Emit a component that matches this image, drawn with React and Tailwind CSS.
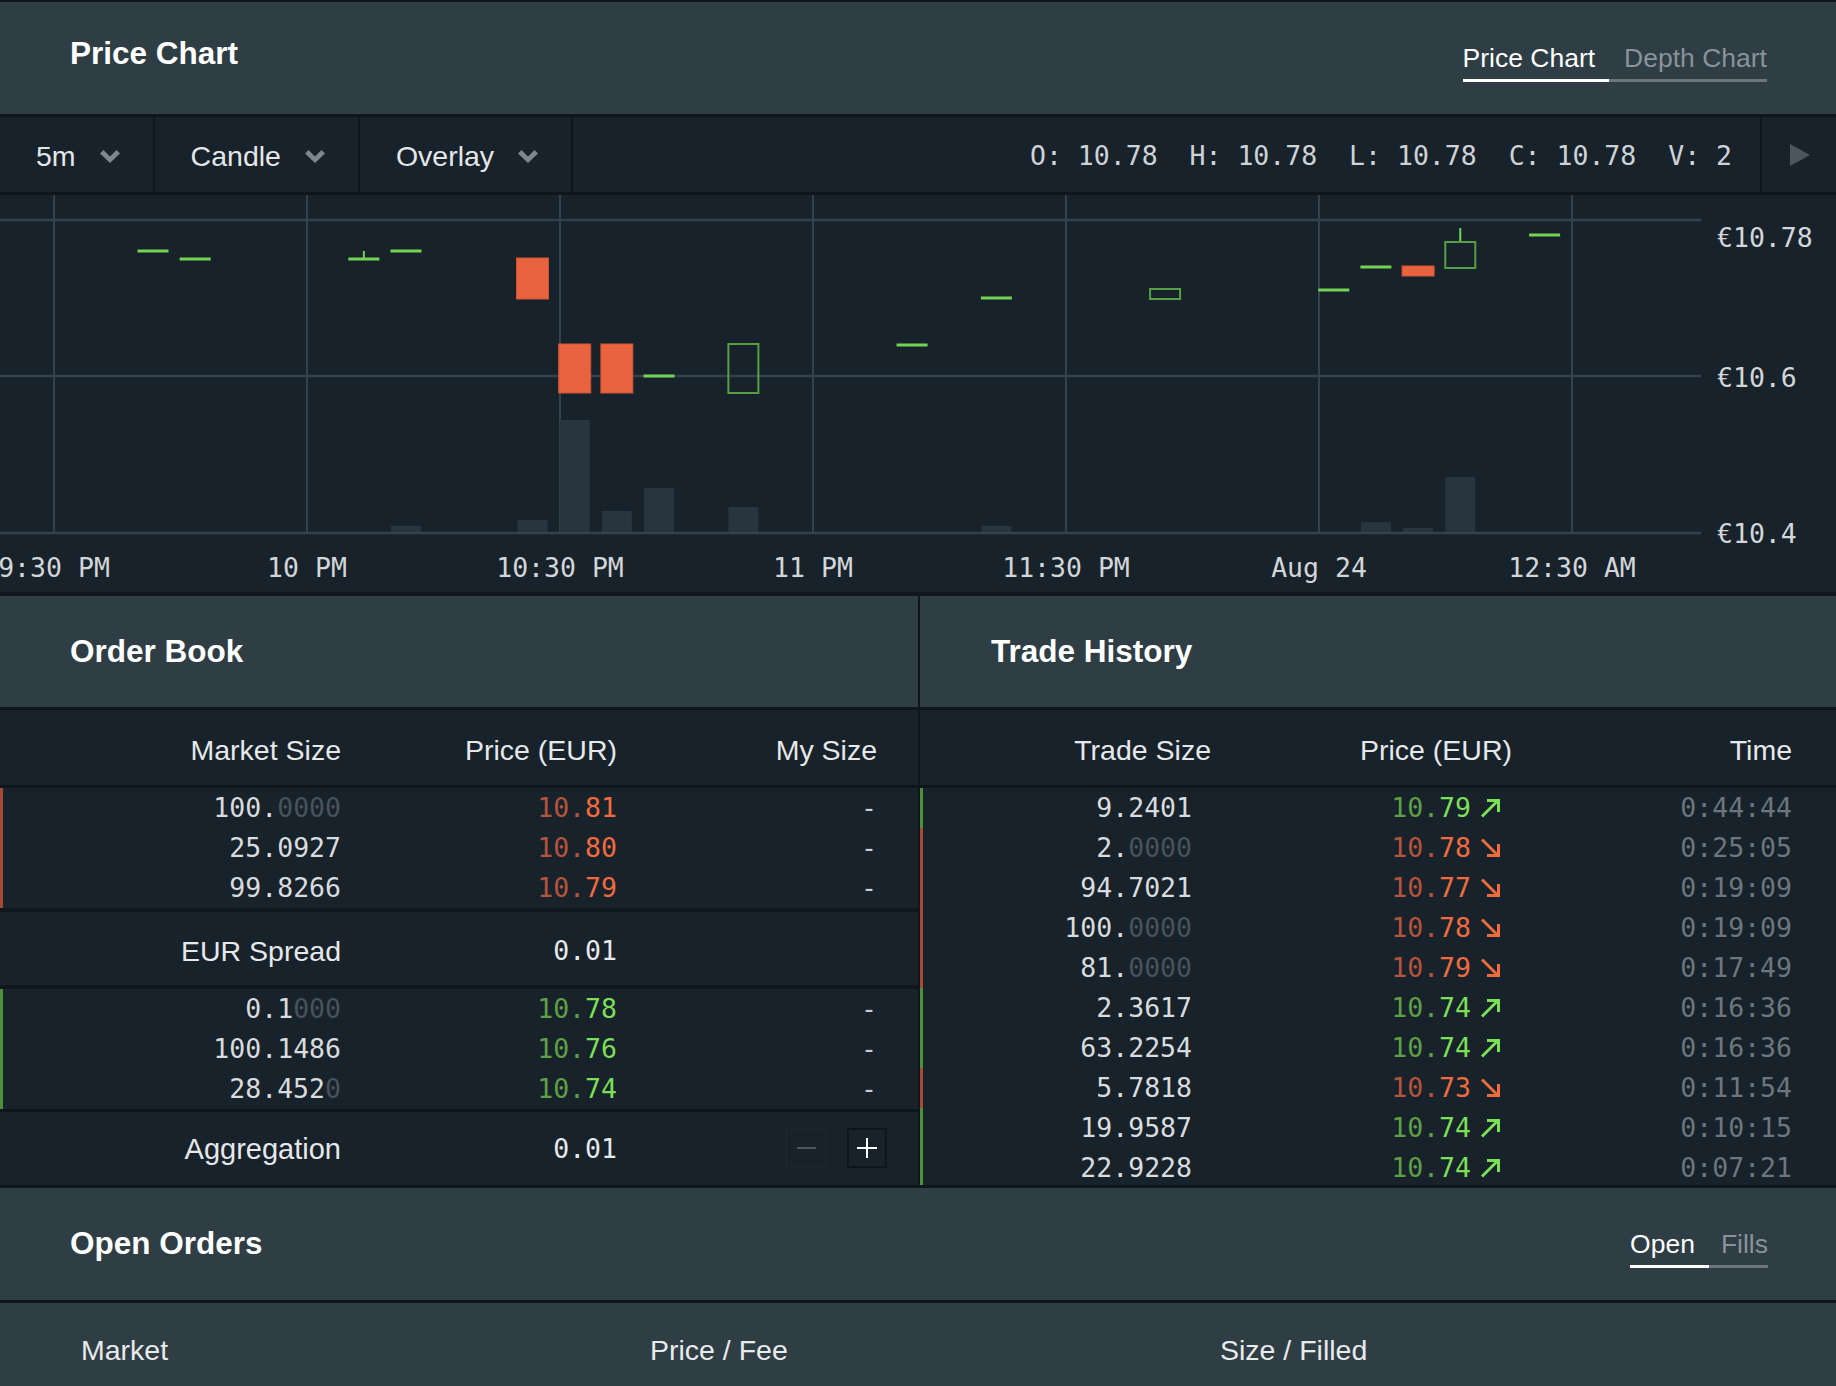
import clsx from "clsx";

const MONO = "font-['DejaVu_Sans_Mono',monospace]";

// chart geometry (px inside the chart svg, origin at chart top-left)
const X0 = 153;
const STEP = 42.17;
const cx = (i) => X0 + i * STEP;

const candles = [
  { i: 0, flat: 56 },
  { i: 1, flat: 64 },
  { i: 5, flat: 64, wick: [56, 64] },
  { i: 6, flat: 56 },
  { i: 9, red: [63, 104] },
  { i: 10, red: [149, 198] },
  { i: 11, red: [149, 198] },
  { i: 12, flat: 181 },
  { i: 14, hollow: [149, 198] },
  { i: 18, flat: 150 },
  { i: 20, flat: 103 },
  { i: 24, hollow: [94, 104] },
  { i: 28, flat: 95 },
  { i: 29, flat: 72 },
  { i: 30, red: [71, 81] },
  { i: 31, hollow: [47, 73], wick: [33, 47] },
  { i: 33, flat: 40 },
];

const volumes = [
  [6, 331], [9, 325], [10, 225], [11, 316], [12, 293],
  [14, 312], [20, 331], [29, 327], [30, 333], [31, 282],
];

const gridX = [54, 307, 560, 813, 1066, 1319, 1572];
const timeLabels = ["9:30 PM", "10 PM", "10:30 PM", "11 PM", "11:30 PM", "Aug 24", "12:30 AM"];

const asks = [
  { size: "100.", dim: "0000", price: "81" },
  { size: "25.0927", dim: "", price: "80" },
  { size: "99.8266", dim: "", price: "79" },
];

const bids = [
  { size: "0.1", dim: "000", price: "78" },
  { size: "100.1486", dim: "", price: "76" },
  { size: "28.452", dim: "0", price: "74" },
];

const trades = [
  ["9.2401", "", "79", "up", "0:44:44"],
  ["2.", "0000", "78", "down", "0:25:05"],
  ["94.7021", "", "77", "down", "0:19:09"],
  ["100.", "0000", "78", "down", "0:19:09"],
  ["81.", "0000", "79", "down", "0:17:49"],
  ["2.3617", "", "74", "up", "0:16:36"],
  ["63.2254", "", "74", "up", "0:16:36"],
  ["5.7818", "", "73", "down", "0:11:54"],
  ["19.9587", "", "74", "up", "0:10:15"],
  ["22.9228", "", "74", "up", "0:07:21"],
];

const Chevron = () => (
  <svg width="20" height="13" viewBox="0 0 20 13">
    <polygon points="0,3.5 3.5,0 10,6.5 16.5,0 20,3.5 10,13" fill="#7e878e" />
  </svg>
);

const Arrow = ({ dir }) => (
  <svg width="21" height="20" viewBox="0 0 21 20" className="shrink-0">
    {dir === "up" ? (
      <path d="M2 18.5 L18 2.5 M7 2.5 H18.5 V14" stroke="currentColor" strokeWidth="3" fill="none" />
    ) : (
      <path d="M2 1.5 L18 17.5 M18.5 6 V17.5 H7" stroke="currentColor" strokeWidth="3" fill="none" />
    )}
  </svg>
);

const Tabs = ({ items }) => (
  <div className="flex mt-[7px]">
    {items.map((t) => (
      <div
        key={t.label}
        className={clsx(
          "pb-[4px] border-b-[3px] text-[26.5px] leading-[34px]",
          t.active ? "border-white text-white" : "border-[#6b767e] text-[#89939a]",
          t.pad
        )}
      >
        {t.label}
      </div>
    ))}
  </div>
);

const Dropdown = ({ label }) => (
  <div className="flex items-center gap-[24px] pl-[36px] pr-[33px] pt-[3px] border-r-2 border-[#0f161c]">
    <span className="text-[28.5px] leading-none text-[#e4e6e8]">{label}</span>
    <Chevron />
  </div>
);

const Divider = ({ h }) => <div className={clsx("bg-[#0f161c] shrink-0", h)} />;

const PriceChart = () => (
  <svg width="1836" height="397" className="block shrink-0 bg-[#18222b]">
    {gridX.map((x) => (
      <line key={x} x1={x} x2={x} y1="0" y2="338" stroke="#36424b" strokeWidth="2" />
    ))}
    {[25, 181, 338].map((y) => (
      <line key={y} x1="0" x2="1701" y1={y} y2={y} stroke="#36424b" strokeWidth="2.5" />
    ))}
    {volumes.map(([i, top]) => (
      <rect key={i} x={cx(i) - 15} y={top} width="30" height={337 - top} fill="#29353e" />
    ))}
    {candles.map((c) => (
      <g key={c.i}>
        {c.wick && (
          <line x1={cx(c.i)} x2={cx(c.i)} y1={c.wick[0]} y2={c.wick[1]} stroke="#72d552" strokeWidth="2" />
        )}
        {c.flat !== undefined && (
          <rect x={cx(c.i) - 15.5} y={c.flat - 1.5} width="31" height="3" fill="#72d552" />
        )}
        {c.red && (
          <rect x={cx(c.i) - 16} y={c.red[0]} width="32" height={c.red[1] - c.red[0]} fill="#e9633f" stroke="#cf5434" strokeWidth="1" />
        )}
        {c.hollow && (
          <rect
            x={cx(c.i) - 15}
            y={c.hollow[0]}
            width="30"
            height={c.hollow[1] - c.hollow[0]}
            fill="none"
            stroke="#55a040"
            strokeWidth="2"
          />
        )}
      </g>
    ))}
    <g fontFamily="'DejaVu Sans Mono', monospace" fontSize="26.5" fill="#d3d6d9">
      <text x="1717" y="42" dominantBaseline="central">€10.78</text>
      <text x="1717" y="182" dominantBaseline="central">€10.6</text>
      <text x="1717" y="338" dominantBaseline="central">€10.4</text>
      {timeLabels.map((t, k) => (
        <text key={t} x={gridX[k]} y="372" textAnchor="middle" dominantBaseline="central">
          {t}
        </text>
      ))}
    </g>
  </svg>
);

const Price = ({ last, side }) => (
  <>
    <span className={side === "ask" ? "text-[#b5533b]" : "text-[#5da045]"}>10.</span>
    <span className={side === "ask" ? "text-[#f26b3e]" : "text-[#7bdf58]"}>{last}</span>
  </>
);

const BookRow = ({ row, side }) => (
  <div className={clsx("flex h-[40px] items-center text-[26.5px] leading-none", MONO)}>
    <div className="w-[341px] text-right text-[#d9dcde]">
      {row.size}
      <span className="text-[#48535b]">{row.dim}</span>
    </div>
    <div className="w-[276px] text-right">
      <Price last={row.price} side={side} />
    </div>
    <div className="w-[260px] text-right text-[#c9cdd0]">-</div>
  </div>
);

const Title = ({ children, className }) => (
  <h2 className={clsx("text-[31.5px] font-bold text-white leading-none", className)}>{children}</h2>
);

export default function App() {
  return (
    <div className="w-[1836px] h-[1386px] overflow-hidden bg-[#0f161c] font-['Liberation_Sans',Arial,sans-serif] flex flex-col">
      <Divider h="h-[2px]" />

      {/* Price chart header */}
      <div className="h-[112px] shrink-0 bg-[#2f3d45] flex items-center justify-between pl-[70px] pr-[69px]">
        <Title className="mb-[8px]">Price Chart</Title>
        <Tabs
          items={[
            { label: "Price Chart", active: true, pad: "pr-[14px]" },
            { label: "Depth Chart", active: false, pad: "pl-[15px]" },
          ]}
        />
      </div>
      <Divider h="h-[3px]" />

      {/* Toolbar */}
      <div className="h-[75px] shrink-0 bg-[#18222b] flex items-stretch">
        <Dropdown label="5m" />
        <Dropdown label="Candle" />
        <Dropdown label="Overlay" />
        <div className="flex-1 flex items-center justify-end pr-[28px] pt-[3px]">
          <span className={clsx("text-[26.5px] leading-none text-[#cfd3d6] whitespace-pre", MONO)}>
            O: 10.78  H: 10.78  L: 10.78  C: 10.78  V: 2
          </span>
        </div>
        <div className="w-[76px] border-l-2 border-[#0f161c] flex items-center justify-center pl-[2px]">
          <svg width="20" height="22" viewBox="0 0 20 22">
            <polygon points="0,0 20,11 0,22" fill="#4b565e" />
          </svg>
        </div>
      </div>
      <Divider h="h-[3px]" />

      <PriceChart />
      <Divider h="h-[4px]" />

      {/* Order book + trade history */}
      <div className="h-[589px] shrink-0 flex overflow-hidden">
        <div className="w-[918px] flex flex-col">
          <div className="h-[111px] shrink-0 bg-[#2f3d45] flex items-center pl-[70px]">
            <Title>Order Book</Title>
          </div>
          <Divider h="h-[3px]" />
          <div className="h-[75px] shrink-0 bg-[#18222b] flex items-center pt-[5px] text-[28.5px] leading-none text-[#e6e8ea]">
            <div className="w-[341px] text-right">Market Size</div>
            <div className="w-[276px] text-right">Price (EUR)</div>
            <div className="w-[260px] text-right">My Size</div>
          </div>
          <Divider h="h-[3px]" />
          <div className="h-[120px] shrink-0 bg-[#18222b] shadow-[inset_3px_0_0_#a44a35]">
            {asks.map((r) => (
              <BookRow key={r.price} row={r} side="ask" />
            ))}
          </div>
          <Divider h="h-[4px]" />
          <div className="h-[73px] shrink-0 bg-[#18222b] flex items-center pt-[6px] leading-none text-[#e6e8ea]">
            <div className="w-[341px] text-right text-[28.5px]">EUR Spread</div>
            <div className={clsx("w-[276px] text-right text-[26.5px]", MONO)}>0.01</div>
          </div>
          <Divider h="h-[4px]" />
          <div className="h-[120px] shrink-0 bg-[#18222b] shadow-[inset_3px_0_0_#4f8f3c]">
            {bids.map((r) => (
              <BookRow key={r.price} row={r} side="bid" />
            ))}
          </div>
          <Divider h="h-[3px]" />
          <div className="h-[73px] shrink-0 bg-[#18222b] flex items-center pt-[2px] leading-none text-[#e6e8ea]">
            <div className="w-[341px] text-right text-[29px]">Aggregation</div>
            <div className={clsx("w-[276px] text-right text-[26.5px]", MONO)}>0.01</div>
            <div className="w-[270px] flex justify-end items-center gap-[21px] -mt-[4px]">
              <button className="w-[40px] h-[38px] border border-[#1d2831] flex items-center justify-center">
                <span className="block w-[19px] h-[2px] bg-[#4b555c]" />
              </button>
              <button className="w-[40px] h-[40px] border-2 border-[#0e151b] flex items-center justify-center">
                <svg width="20" height="20" viewBox="0 0 20 20">
                  <path d="M0 10 H20 M10 0 V20" stroke="#ffffff" strokeWidth="2" />
                </svg>
              </button>
            </div>
          </div>
        </div>

        <div className="w-[2px] shrink-0 bg-[#0f161c]" />

        <div className="flex-1 flex flex-col">
          <div className="h-[111px] shrink-0 bg-[#2f3d45] flex items-center pl-[71px]">
            <Title>Trade History</Title>
          </div>
          <Divider h="h-[3px]" />
          <div className="h-[75px] shrink-0 bg-[#18222b] flex items-center pt-[5px] text-[28.5px] leading-none text-[#e6e8ea]">
            <div className="w-[291px] text-right">Trade Size</div>
            <div className="w-[301px] text-right">Price (EUR)</div>
            <div className="w-[280px] text-right">Time</div>
          </div>
          <Divider h="h-[3px]" />
          <div className="flex-1 bg-[#18222b] overflow-hidden">
            {trades.map(([size, dim, last, dir, time], k) => (
              <div
                key={k}
                className={clsx(
                  "flex h-[40px] items-center text-[26.5px] leading-none",
                  MONO,
                  dir === "up" ? "shadow-[inset_3px_0_0_#4f8f3c]" : "shadow-[inset_3px_0_0_#a44a35]"
                )}
              >
                <div className="w-[272px] text-right text-[#d9dcde]">
                  {size}
                  <span className="text-[#48535b]">{dim}</span>
                </div>
                <div
                  className={clsx(
                    "w-[309px] flex justify-end items-center gap-[9px]",
                    dir === "up" ? "text-[#7bdf58]" : "text-[#f26b3e]"
                  )}
                >
                  <span>
                    <Price last={last} side={dir === "up" ? "bid" : "ask"} />
                  </span>
                  <Arrow dir={dir} />
                </div>
                <div className="w-[291px] text-right text-[#6c767d]">{time}</div>
              </div>
            ))}
          </div>
        </div>
      </div>
      <Divider h="h-[3px]" />

      {/* Open orders */}
      <div className="h-[112px] shrink-0 bg-[#2f3d45] flex items-center justify-between pl-[70px] pr-[68px]">
        <Title>Open Orders</Title>
        <Tabs
          items={[
            { label: "Open", active: true, pad: "pr-[14px]" },
            { label: "Fills", active: false, pad: "pl-[12px]" },
          ]}
        />
      </div>
      <Divider h="h-[3px]" />
      <div className="h-[94px] shrink-0 bg-[#2f3d45] flex items-center pl-[81px] text-[28.5px] leading-none text-[#e8eaeb]">
        <div className="w-[569px]">Market</div>
        <div className="w-[570px]">Price / Fee</div>
        <div>Size / Filled</div>
      </div>
    </div>
  );
}
